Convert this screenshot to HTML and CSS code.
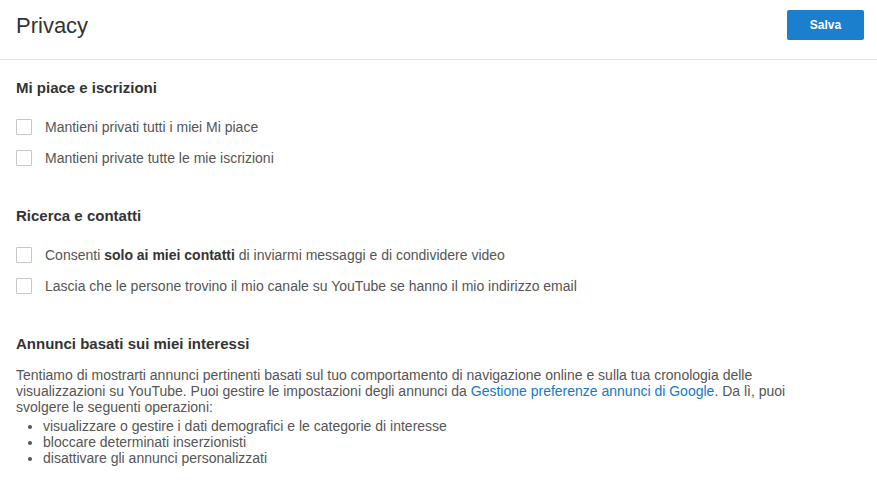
FILE: index.html
```html
<!DOCTYPE html>
<html lang="it">
<head>
    <meta charset="UTF-8">
    <meta name="viewport" content="width=device-width, initial-scale=1.0">
    <title>Privacy</title>
    <link rel="stylesheet" href="styles.css">
</head>
<body>

    <div class="header">
        <h1>Privacy</h1>
        <button class="save">Salva</button>
    </div>

    <div class="section">
        <h2>Mi piace e iscrizioni</h2>
        <label class="option"><span class="box"></span>Mantieni privati tutti i miei Mi piace</label>
        <label class="option"><span class="box"></span>Mantieni private tutte le mie iscrizioni</label>
    </div>

    <div class="section">
        <h2>Ricerca e contatti</h2>
        <label class="option"><span class="box"></span><span>Consenti <b>solo ai miei contatti</b> di inviarmi messaggi e di condividere video</span></label>
        <label class="option"><span class="box"></span>Lascia che le persone trovino il mio canale su YouTube se hanno il mio indirizzo email</label>
    </div>

    <div class="section ads">
        <h2>Annunci basati sui miei interessi</h2>
        <p>Tentiamo di mostrarti annunci pertinenti basati sul tuo comportamento di navigazione online e sulla tua cronologia delle visualizzazioni su YouTube. Puoi gestire le impostazioni degli annunci da <a href="#">Gestione preferenze annunci di Google</a>. Da lì, puoi svolgere le seguenti operazioni:</p>
        <ul>
            <li>visualizzare o gestire i dati demografici e le categorie di interesse</li>
            <li>bloccare determinati inserzionisti</li>
            <li>disattivare gli annunci personalizzati</li>
        </ul>
    </div>

</body>
</html>
```

FILE: styles.css
```css
body {
    font-family: Arial, "Liberation Sans", sans-serif;
    background-color: #fff;
    color: #555;
    margin: 0;
    font-size: 14px;
}
.header {
    display: flex;
    justify-content: space-between;
    align-items: center;
    height: 59px;
    padding: 0 13px 0 16px;
    border-bottom: 1px solid #e2e2e2;
}
.header h1 {
    margin: 0 0 7px;
    font-size: 22px;
    font-weight: normal;
    color: #333;
}
.save {
    width: 77px;
    height: 30px;
    margin-bottom: 10px;
    border: none;
    border-radius: 2px;
    background-color: #1b7fcd;
    color: #fff;
    font-family: inherit;
    font-size: 12px;
    font-weight: bold;
    cursor: pointer;
}
.section {
    padding: 18px 16px 22px;
}
.section h2 {
    margin: 0 0 21px;
    font-size: 15px;
    line-height: 20px;
    color: #333;
}
.option {
    display: flex;
    align-items: center;
    height: 16px;
    margin-top: 15px;
    cursor: pointer;
}
.section h2 + .option {
    margin-top: 0;
}
.option .box {
    width: 14px;
    height: 14px;
    margin-right: 13px;
    border: 1px solid #c6c6c6;
    border-radius: 1px;
    background: #fff;
    flex-shrink: 0;
}
.option b {
    color: #333;
}
.ads h2 {
    margin-bottom: 13px;
}
.ads p {
    max-width: 812px;
    margin: 0;
    line-height: 16px;
}
.ads a {
    color: #167ac6;
    text-decoration: none;
}
.ads ul {
    margin: 3px 0 0;
    padding-left: 27px;
}
.ads li {
    line-height: 16px;
}
```
